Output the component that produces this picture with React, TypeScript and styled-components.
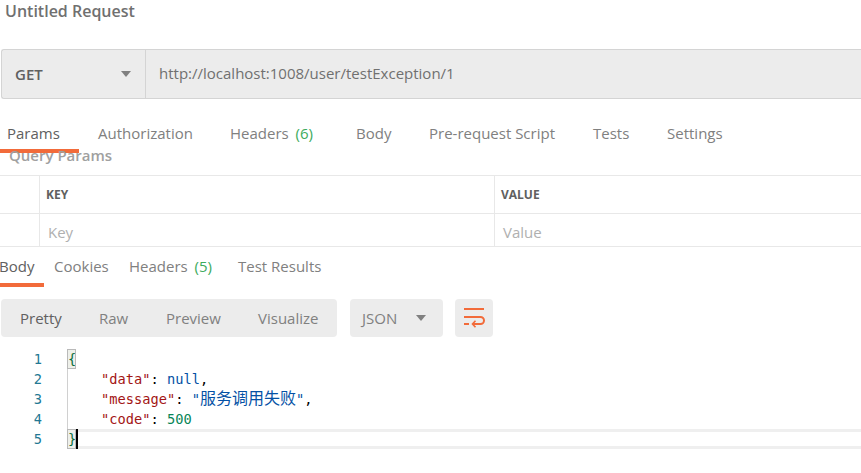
import React from "react";
import styled, { createGlobalStyle } from "styled-components";

const Global = createGlobalStyle`
  html, body { margin: 0; padding: 0; background: #fff; }
  body { font-family: "Open Sans", "Noto Sans", sans-serif; overflow: hidden; }
`;
const Page = styled.div`
  width: 861px;
  height: 473px;
  display: flex;
  flex-direction: column;
  overflow: hidden;
  color: #808080;
`;
const Title = styled.div`
  height: 49px;
  padding-left: 5px;
  font-size: 16px;
  font-weight: 600;
  line-height: 22px;
  color: #707070;
  flex-shrink: 0;
`;
const RequestBar = styled.div`
  height: 50px;
  margin-left: 1px;
  box-sizing: border-box;
  display: flex;
  background: #ececec;
  border: 1px solid #d4d4d4;
  border-right: none;
  border-radius: 3px 0 0 3px;
  flex-shrink: 0;
`;
const Method = styled.div`
  width: 144px;
  box-sizing: border-box;
  padding: 0 14px 0 13px;
  display: flex;
  align-items: center;
  justify-content: space-between;
  border-right: 1px solid #d4d4d4;
  font-size: 15px;
  font-weight: 600;
  color: #606060;
`;
const Caret = styled.span`
  width: 0;
  height: 0;
  border-left: 5px solid transparent;
  border-right: 5px solid transparent;
  border-top: 6px solid #808080;
`;
const Url = styled.div`
  flex: 1;
  padding-left: 13px;
  display: flex;
  align-items: center;
  font-size: 15px;
  color: #707070;
  padding-bottom: 2px;
`;
const ReqTabs = styled.div`
  height: 54px;
  display: flex;
  flex-shrink: 0;
`;
const ReqTab = styled.div<{ $w: number; $pad?: number; $active?: boolean }>`
  width: ${(p) => p.$w}px;
  box-sizing: border-box;
  padding: 23px 0 0 ${(p) => p.$pad ?? 19}px;
  font-size: 15px;
  line-height: 22px;
  white-space: nowrap;
  color: ${(p) => (p.$active ? "#606060" : "#808080")};
  border-bottom: 4px solid ${(p) => (p.$active ? "#f26b3a" : "transparent")};
`;
const Count = styled.span`
  color: #3dab5d;
  margin-left: 3px;
`;
const SectionLabel = styled.div`
  height: 28px;
  margin-top: -6px;
  padding-left: 9px;
  font-size: 15px;
  font-weight: 600;
  line-height: 16px;
  color: #a0a0a0;
  flex-shrink: 0;
`;
const Row = styled.div<{ $h: number }>`
  height: ${(p) => p.$h}px;
  box-sizing: border-box;
  display: grid;
  grid-template-columns: 39px 455px 1fr;
  border-top: 1px solid #e8e8e8;
  flex-shrink: 0;
`;
const Cell = styled.div<{ $head?: boolean }>`
  border-left: 1px solid #e8e8e8;
  padding-left: ${(p) => (p.$head ? 6 : 8)}px;
  padding-top: ${(p) => (p.$head ? 0 : 4)}px;
  display: flex;
  align-items: center;
  font-size: ${(p) => (p.$head ? 12 : 15)}px;
  font-weight: ${(p) => (p.$head ? 700 : 400)};
  color: ${(p) => (p.$head ? "#606060" : "#b0b0b0")};
  &:first-child { border-left: none; }
`;
const ResTabs = styled.div`
  height: 41px;
  box-sizing: border-box;
  border-top: 1px solid #e8e8e8;
  display: flex;
  flex-shrink: 0;
`;
const ResTab = styled.div<{ $w: number; $pad: number; $active?: boolean }>`
  width: ${(p) => p.$w}px;
  box-sizing: border-box;
  padding: 8px 0 0 ${(p) => p.$pad}px;
  font-size: 15px;
  line-height: 22px;
  white-space: nowrap;
  color: ${(p) => (p.$active ? "#606060" : "#808080")};
  border-bottom: 4px solid ${(p) => (p.$active ? "#f26b3a" : "transparent")};
`;
const BodyLabel = styled.span`
  margin-left: -1px;
`;
const Toolbar = styled.div`
  height: 38px;
  margin-top: 12px;
  padding-left: 1px;
  display: flex;
  flex-shrink: 0;
`;
const Segments = styled.div`
  width: 336px;
  display: flex;
  background: #ececec;
  border-radius: 4px;
`;
const Segment = styled.div<{ $w: number; $pad: number; $active?: boolean }>`
  width: ${(p) => p.$w}px;
  box-sizing: border-box;
  padding-left: ${(p) => p.$pad}px;
  font-size: 15px;
  line-height: 38px;
  color: ${(p) => (p.$active ? "#606060" : "#808080")};
`;
const FormatSelect = styled.div`
  width: 93px;
  margin-left: 13px;
  box-sizing: border-box;
  padding: 0 17px 0 12px;
  display: flex;
  align-items: center;
  justify-content: space-between;
  background: #ececec;
  border-radius: 4px;
  font-size: 15px;
  color: #808080;
`;
const WrapButton = styled.div`
  width: 38px;
  margin-left: 12px;
  display: flex;
  align-items: center;
  justify-content: center;
  background: #ececec;
  border-radius: 4px;
`;
const Editor = styled.div`
  margin-top: 12px;
  font-family: "DejaVu Sans Mono", "Noto Sans CJK SC", monospace;
  font-size: 13.7px;
  line-height: 20px;
  flex-shrink: 0;
`;
const Line = styled.div`
  height: 20px;
  box-sizing: border-box;
  display: flex;
  white-space: pre;
`;
const Gutter = styled.div`
  width: 42px;
  box-sizing: border-box;
  text-align: right;
  color: #237893;
  flex-shrink: 0;
`;
const Code = styled.div<{ $current?: boolean }>`
  flex: 1;
  margin-left: 25px;
  position: relative;
  border-left: 1px solid #d0d0d0;
  color: #000;
  ${(p) =>
    p.$current
      ? `box-sizing: border-box; height: 20px; border-top: 3px solid #efefef; border-bottom: 3px solid #efefef; line-height: 14px;`
      : ""}
`;
const Bracket = styled.span<{ $current?: boolean }>`
  display: inline-block;
  box-sizing: border-box;
  vertical-align: top;
  margin-left: -1px;
  margin-top: ${(p) => (p.$current ? -3 : 0)}px;
  width: 9px;
  height: 20px;
  border: 1px solid #b9b9b9;
  background: #eef0ea;
  color: #0b6e3a;
  text-align: center;
  line-height: 19px;
  overflow: hidden;
`;
const CaretBar = styled.span`
  position: absolute;
  left: 8px;
  top: -3px;
  width: 2px;
  height: 20px;
  background: #000;
`;
const Key = styled.span`color: #a31515;`;
const Str = styled.span`color: #0451a5;`;
const Cjk = styled.span`
  font-family: "Noto Sans CJK SC", sans-serif;
  font-size: 16px;
  line-height: 1;
`;
const Kw = styled.span`color: #0451a5;`;
const Num = styled.span`color: #098658;`;

export default function App() {
  return (
    <Page>
      <Global />
      <Title>Untitled Request</Title>
      <RequestBar>
        <Method>
          GET
          <Caret />
        </Method>
        <Url>http://localhost:1008/user/testException/1</Url>
      </RequestBar>
      <ReqTabs>
        <ReqTab $w={79} $pad={7} $active>Params</ReqTab>
        <ReqTab $w={132}>Authorization</ReqTab>
        <ReqTab $w={126}>Headers<Count> (6)</Count></ReqTab>
        <ReqTab $w={73}>Body</ReqTab>
        <ReqTab $w={163}>Pre-request Script</ReqTab>
        <ReqTab $w={74} $pad={20}>Tests</ReqTab>
        <ReqTab $w={100} $pad={20}>Settings</ReqTab>
      </ReqTabs>
      <SectionLabel>Query Params</SectionLabel>
      <Row $h={38}>
        <Cell $head />
        <Cell $head>KEY</Cell>
        <Cell $head>VALUE</Cell>
      </Row>
      <Row $h={33}>
        <Cell />
        <Cell>Key</Cell>
        <Cell>Value</Cell>
      </Row>
      <ResTabs>
        <ResTab $w={44} $pad={0} $active><BodyLabel>Body</BodyLabel></ResTab>
        <ResTab $w={75} $pad={10}>Cookies</ResTab>
        <ResTab $w={109} $pad={10}>Headers<Count> (5)</Count></ResTab>
        <ResTab $w={110} $pad={10}>Test Results</ResTab>
      </ResTabs>
      <Toolbar>
        <Segments>
          <Segment $w={81} $pad={19} $active>Pretty</Segment>
          <Segment $w={67} $pad={17}>Raw</Segment>
          <Segment $w={92} $pad={17}>Preview</Segment>
          <Segment $w={96} $pad={17}>Visualize</Segment>
        </Segments>
        <FormatSelect>
          JSON
          <Caret />
        </FormatSelect>
        <WrapButton>
          <svg width="22" height="20" viewBox="0 0 22 20" fill="none" stroke="#f26b3a" strokeWidth="2">
            <path d="M1 1h20" />
            <path d="M1 9h16.5a3 3 0 0 1 0 7H10" />
            <path d="M1 16h5" />
            <path d="M12.5 12.8 9.5 16l3 3.2" strokeWidth="1.6" />
          </svg>
        </WrapButton>
      </Toolbar>
      <Editor>
        <Line>
          <Gutter>1</Gutter>
          <Code><Bracket>{"{"}</Bracket></Code>
        </Line>
        <Line>
          <Gutter>2</Gutter>
          <Code>{"    "}<Key>"data"</Key>: <Kw>null</Kw>,</Code>
        </Line>
        <Line>
          <Gutter>3</Gutter>
          <Code>{"    "}<Key>"message"</Key>: <Str>"<Cjk>服务调用失败</Cjk>"</Str>,</Code>
        </Line>
        <Line>
          <Gutter>4</Gutter>
          <Code>{"    "}<Key>"code"</Key>: <Num>500</Num></Code>
        </Line>
        <Line>
          <Gutter>5</Gutter>
          <Code $current>
            <Bracket $current>{"}"}</Bracket>
            <CaretBar />
          </Code>
        </Line>
      </Editor>
    </Page>
  );
}
